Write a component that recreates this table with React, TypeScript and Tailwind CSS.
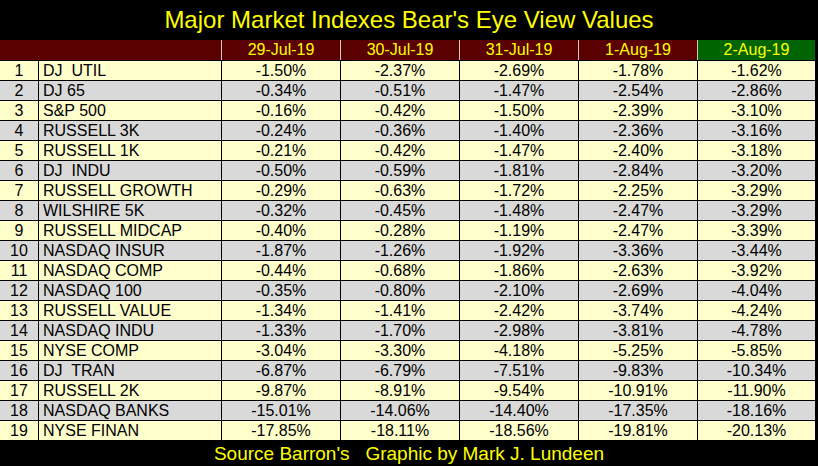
const dates = ["29-Jul-19", "30-Jul-19", "31-Jul-19", "1-Aug-19", "2-Aug-19"];

const rows: [string, string[]][] = [
  ["DJ  UTIL", ["-1.50%", "-2.37%", "-2.69%", "-1.78%", "-1.62%"]],
  ["DJ 65", ["-0.34%", "-0.51%", "-1.47%", "-2.54%", "-2.86%"]],
  ["S&P 500", ["-0.16%", "-0.42%", "-1.50%", "-2.39%", "-3.10%"]],
  ["RUSSELL 3K", ["-0.24%", "-0.36%", "-1.40%", "-2.36%", "-3.16%"]],
  ["RUSSELL 1K", ["-0.21%", "-0.42%", "-1.47%", "-2.40%", "-3.18%"]],
  ["DJ  INDU", ["-0.50%", "-0.59%", "-1.81%", "-2.84%", "-3.20%"]],
  ["RUSSELL GROWTH", ["-0.29%", "-0.63%", "-1.72%", "-2.25%", "-3.29%"]],
  ["WILSHIRE 5K", ["-0.32%", "-0.45%", "-1.48%", "-2.47%", "-3.29%"]],
  ["RUSSELL MIDCAP", ["-0.40%", "-0.28%", "-1.19%", "-2.47%", "-3.39%"]],
  ["NASDAQ INSUR", ["-1.87%", "-1.26%", "-1.92%", "-3.36%", "-3.44%"]],
  ["NASDAQ COMP", ["-0.44%", "-0.68%", "-1.86%", "-2.63%", "-3.92%"]],
  ["NASDAQ 100", ["-0.35%", "-0.80%", "-2.10%", "-2.69%", "-4.04%"]],
  ["RUSSELL VALUE", ["-1.34%", "-1.41%", "-2.42%", "-3.74%", "-4.24%"]],
  ["NASDAQ INDU", ["-1.33%", "-1.70%", "-2.98%", "-3.81%", "-4.78%"]],
  ["NYSE COMP", ["-3.04%", "-3.30%", "-4.18%", "-5.25%", "-5.85%"]],
  ["DJ  TRAN", ["-6.87%", "-6.79%", "-7.51%", "-9.83%", "-10.34%"]],
  ["RUSSELL 2K", ["-9.87%", "-8.91%", "-9.54%", "-10.91%", "-11.90%"]],
  ["NASDAQ BANKS", ["-15.01%", "-14.06%", "-14.40%", "-17.35%", "-18.16%"]],
  ["NYSE FINAN", ["-17.85%", "-18.11%", "-18.56%", "-19.81%", "-20.13%"]],
];

export default function App() {
  return (
    <div
      className="w-[818px] h-[466px] bg-black overflow-hidden"
      style={{ fontFamily: '"Liberation Sans", Arial, sans-serif' }}
    >
      {/* Title */}
      <div className="h-[40px] flex items-center justify-center pb-[1px] text-[24px] text-[#ffff00] leading-none">
        Major Market Indexes Bear's Eye View Values
      </div>

      {/* Header */}
      <div className="w-[815px] grid grid-cols-[221px_118px_118px_118px_118px_117px] gap-px bg-[#d8c8c8]">
        <div className="h-[20px] bg-[#5a0000]" />
        {dates.map((d, i) => (
          <div
            key={d}
            className={`h-[20px] flex items-center justify-center text-[16px] text-[#ffff00] ${
              i === 4 ? "bg-[#006400]" : "bg-[#5a0000]"
            }`}
          >
            {d}
          </div>
        ))}
      </div>

      {/* Body */}
      <div className="w-[815px] mt-px grid grid-cols-[38px_182px_118px_118px_118px_118px_117px] gap-px bg-black border-b border-black text-[16px] text-black leading-none">
        {rows.map(([name, vals], r) => {
          const bg = r % 2 === 0 ? "bg-[#ffffcc]" : "bg-[#d9d9d9]";
          return [
            <div key={`n${r}`} className={`h-[19px] flex items-center justify-center ${bg}`}>
              {r + 1}
            </div>,
            <div key={`l${r}`} className={`h-[19px] flex items-center pl-[4px] whitespace-pre ${bg}`}>
              {name}
            </div>,
            ...vals.map((v, c) => (
              <div key={`v${r}-${c}`} className={`h-[19px] flex items-center justify-center ${bg}`}>
                {v}
              </div>
            )),
          ];
        })}
      </div>

      {/* Footer */}
      <div className="h-[25px] flex items-center justify-center text-[19px] text-[#ffff00] whitespace-pre leading-none">
        Source Barron's   Graphic by Mark J. Lundeen
      </div>
    </div>
  );
}
